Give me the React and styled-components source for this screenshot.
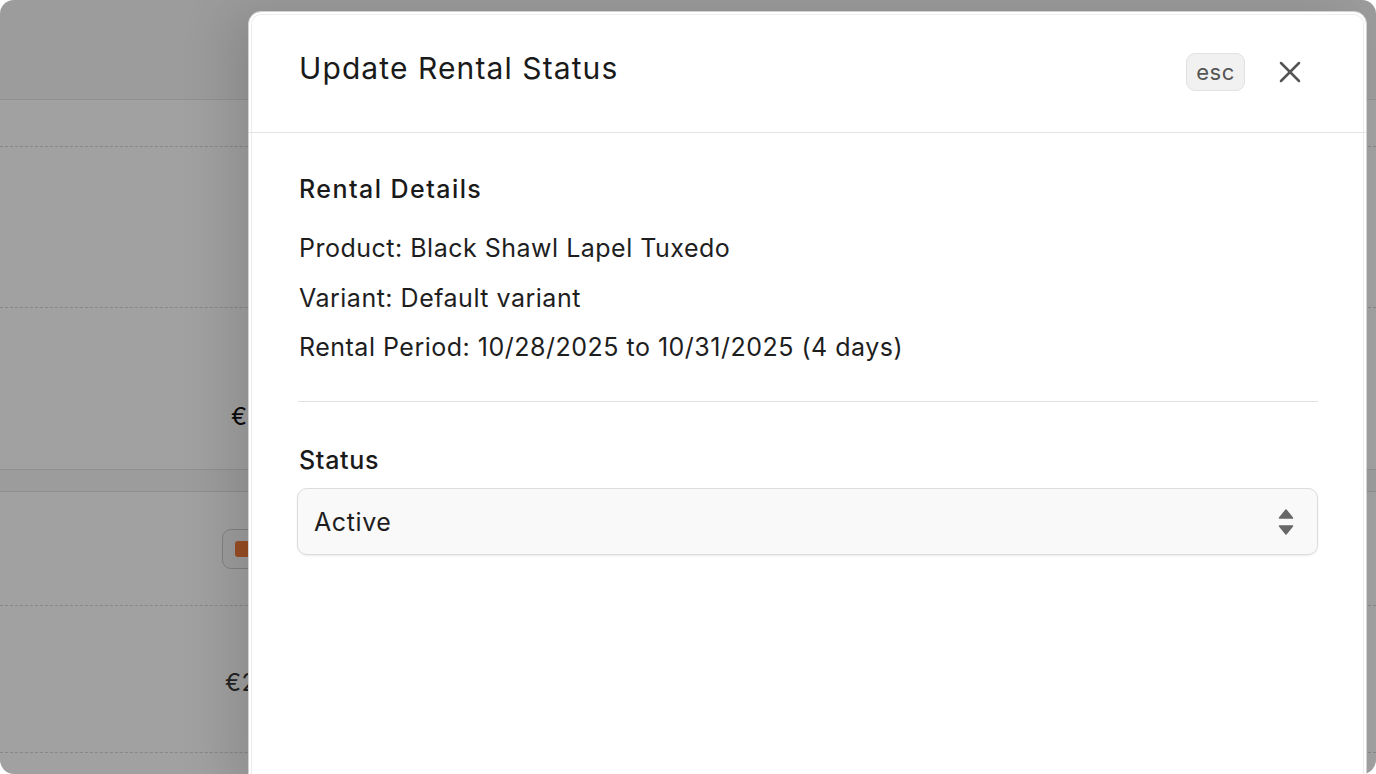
import React from "react";
import styled, { createGlobalStyle } from "styled-components";

const Global = createGlobalStyle`
  html, body { margin: 0; padding: 0; background: #ffffff; }
  body { font-family: Inter, "Noto Sans", "Liberation Sans", sans-serif; }
  #root { width: 1376px; height: 774px; }
`;

const Frame = styled.div`
  position: relative;
  width: 1376px;
  height: 774px;
  border-radius: 14px;
  overflow: hidden;
  background: #ffffff;
`;

const Page = styled.div`
  display: flex;
  flex-direction: column;
  height: 100%;
`;

const HeaderBand = styled.div`
  height: 99px;
  flex: none;
  background: #f8f8f8;
  border-bottom: 1px solid #e6e6e6;
`;

const Row = styled.div`
  flex: none;
  height: ${(p) => p.$h}px;
  display: flex;
  align-items: ${(p) => p.$align || "center"};
  padding-left: ${(p) => p.$pl || 231}px;
  box-sizing: border-box;
  background: ${(p) => p.$bg || "#ffffff"};
  border-bottom: 1px ${(p) => (p.$solid ? "solid" : "dashed")} ${(p) => (p.$solid ? "#e3e3e3" : "#d6d6d6")};
  font-size: 24px;
  letter-spacing: 0.6px;
  color: #1c1c1c;
  white-space: nowrap;
`;

const Amount = styled.span`
  color: ${(p) => (p.$muted ? "#3a3a3a" : "#111")};
`;

const Pill = styled.span`
  display: inline-flex;
  align-items: center;
  gap: 8px;
  height: 38px;
  padding: 0 12px;
  border: 1px solid #cfcfcf;
  border-radius: 9px;
  background: #fbfbfb;
`;

const Dot = styled.span`
  width: 15px;
  height: 16px;
  border-radius: 3px;
  background: #f47c3a;
`;

const Overlay = styled.div`
  position: absolute;
  inset: 0;
  background: rgba(0, 0, 0, 0.37);
`;

const Modal = styled.div`
  position: absolute;
  top: 11px;
  left: 248px;
  right: 9px;
  bottom: -20px;
  background: #ffffff;
  border: 1px solid #d2d2d2;
  border-radius: 13px;
  box-shadow: inset 0 0 0 2px #ffffff, inset 0 0 0 3px #ededed, -20px 0 50px rgba(0, 0, 0, 0.12);
  display: flex;
  flex-direction: column;
  color: #1a1a1a;
`;

const ModalHeader = styled.div`
  height: 120px;
  flex: none;
  display: flex;
  align-items: center;
  padding: 0 50px;
  border-bottom: 1px solid #e4e4e4;
`;

const Title = styled.h2`
  margin: 0 0 8px 0;
  font-size: 30px;
  line-height: 36px;
  font-weight: 400;
  letter-spacing: 1.1px;
  flex: 1;
`;

const Kbd = styled.span`
  display: inline-flex;
  align-items: center;
  justify-content: center;
  height: 36px;
  padding: 0 9px;
  border: 1px solid #e2e2e2;
  border-radius: 9px;
  background: #f1f1f1;
  color: #555;
  font-size: 22px;
  letter-spacing: 0.6px;
  line-height: 1;
`;

const CloseBtn = styled.button`
  border: none;
  background: transparent;
  padding: 0;
  margin: 0 8px 0 27px;
  width: 36px;
  height: 36px;
  display: flex;
  align-items: center;
  justify-content: center;
  color: #555;
  cursor: pointer;
`;

const Body = styled.div`
  padding: 40px 48px 0 50px;
  display: flex;
  flex-direction: column;
`;

const SectionTitle = styled.h3`
  margin: 0;
  font-size: 25px;
  line-height: 32px;
  font-weight: 500;
  letter-spacing: 1.45px;
`;

const DetailList = styled.div`
  margin-top: 27px;
  display: flex;
  flex-direction: column;
  gap: 17.5px;
`;

const Detail = styled.div`
  font-size: 25px;
  line-height: 32px;
  letter-spacing: 0.5px;
  color: #1e1e1e;
`;

const Divider = styled.hr`
  margin: 38px 0 0 -1px;
  border: none;
  border-top: 1px solid #e0e0e0;
`;

const Label = styled.label`
  margin-top: 42px;
  font-size: 25px;
  line-height: 32px;
  font-weight: 500;
  letter-spacing: 0.7px;
`;

const Select = styled.div`
  margin: 12px 0 0 -2px;
  height: 67px;
  box-sizing: border-box;
  border: 1px solid #dcdcdc;
  border-radius: 10px;
  background: #f9f9f9;
  box-shadow: 0 1px 2px rgba(0, 0, 0, 0.08);
  display: flex;
  align-items: center;
  justify-content: space-between;
  padding: 0 23px 0 16px;
  font-size: 25px;
  letter-spacing: 0.6px;
  color: #1e1e1e;
`;

const Arrows = () => (
  <svg width="16" height="28" viewBox="0 0 16 28" aria-hidden>
    <path d="M8 2 L14.5 10 L1.5 10 Z" fill="#676767" strokeLinejoin="round" stroke="#676767" strokeWidth="1.5" />
    <path d="M1.5 18 L14.5 18 L8 26 Z" fill="#676767" strokeLinejoin="round" stroke="#676767" strokeWidth="1.5" />
  </svg>
);

const XIcon = () => (
  <svg width="36" height="36" viewBox="0 0 24 24" fill="none" stroke="currentColor" strokeWidth="1.7" strokeLinecap="round" aria-hidden>
    <path d="M18 6 L6 18" />
    <path d="M6 6 L18 18" />
  </svg>
);

export default function App() {
  return (
    <>
      <Global />
      <Frame>
        <Page>
          <HeaderBand />
          <Row $h={47} />
          <Row $h={161} />
          <Row $h={162} $solid $align="flex-start" style={{ paddingTop: 94 }}>
            <Amount>€245.00</Amount>
          </Row>
          <Row $h={22} $solid $bg="#f7f7f7" />
          <Row $h={114} $pl={222}>
            <Pill>
              <Dot />
              Pending
            </Pill>
          </Row>
          <Row $h={147} $pl={225} $align="flex-start" style={{ paddingTop: 62 }}>
            <Amount $muted>€245.00</Amount>
          </Row>
          <Row $h={40} />
        </Page>
        <Overlay />
        <Modal role="dialog" aria-labelledby="dlg-title">
          <ModalHeader>
            <Title id="dlg-title">Update Rental Status</Title>
            <Kbd>esc</Kbd>
            <CloseBtn aria-label="Close">
              <XIcon />
            </CloseBtn>
          </ModalHeader>
          <Body>
            <SectionTitle>Rental Details</SectionTitle>
            <DetailList>
              <Detail>Product: Black Shawl Lapel Tuxedo</Detail>
              <Detail>Variant: Default variant</Detail>
              <Detail>Rental Period: 10/28/2025 to 10/31/2025 (4 days)</Detail>
            </DetailList>
            <Divider />
            <Label>Status</Label>
            <Select>
              <span>Active</span>
              <Arrows />
            </Select>
          </Body>
        </Modal>
      </Frame>
    </>
  );
}
